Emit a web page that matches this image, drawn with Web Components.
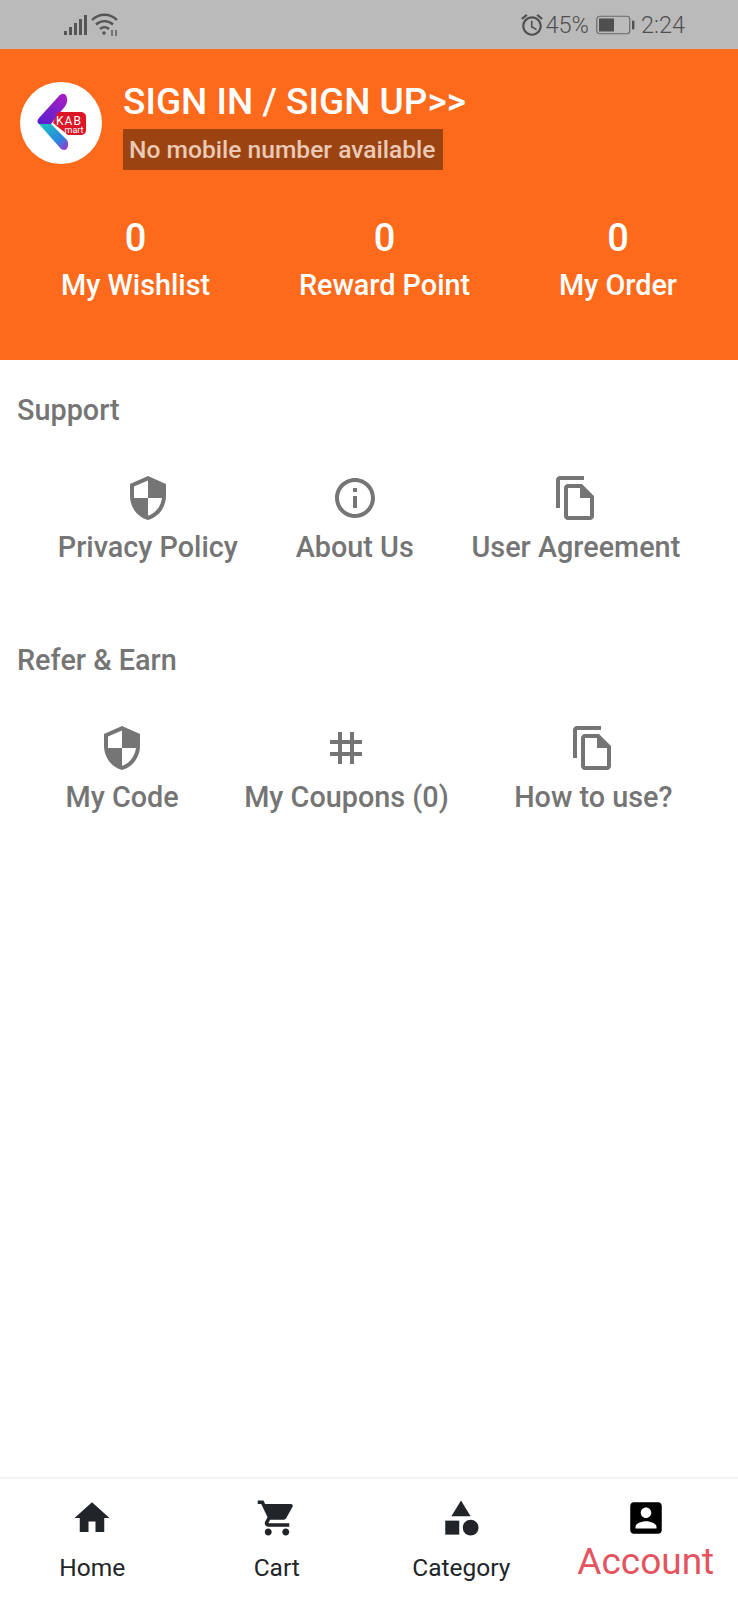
<!DOCTYPE html>
<html>
<head>
<meta charset="utf-8">
<title>Account</title>
<style>
  html, body { margin: 0; padding: 0; height: 100%; background: #fff; }
  body { font-family: Roboto, "Noto Sans", sans-serif; }
</style>
</head>
<body>
<app-screen>
  <status-bar></status-bar>
  <account-header></account-header>
  <main-list>
    <menu-section title="Support">
      <menu-tile icon="security" label="Privacy Policy"></menu-tile>
      <menu-tile icon="info" label="About Us"></menu-tile>
      <menu-tile icon="copy" label="User Agreement"></menu-tile>
    </menu-section>
    <menu-section title="Refer &amp; Earn">
      <menu-tile icon="security" label="My Code"></menu-tile>
      <menu-tile icon="tag" label="My Coupons (0)"></menu-tile>
      <menu-tile icon="copy" label="How to use?"></menu-tile>
    </menu-section>
  </main-list>
  <bottom-nav>
    <nav-item icon="home" label="Home"></nav-item>
    <nav-item icon="cart" label="Cart"></nav-item>
    <nav-item icon="category" label="Category"></nav-item>
    <nav-item icon="account" label="Account" active></nav-item>
  </bottom-nav>
</app-screen>

<script>
const ICONS = {
  security: `<path d="M12 1L3 5v6c0 5.55 3.84 10.74 9 12 5.16-1.26 9-6.45 9-12V5l-9-4zm0 10.99h7c-.53 4.12-3.28 7.79-7 8.94V12H5V6.3l7-3.11v8.8z"/>`,
  info: `<path d="M11 7h2v2h-2zm0 4h2v6h-2zm1-9C6.48 2 2 6.48 2 12s4.48 10 10 10 10-4.48 10-10S17.52 2 12 2zm0 18c-4.41 0-8-3.59-8-8s3.59-8 8-8 8 3.59 8 8-3.59 8-8 8z"/>`,
  copy: `<path d="M16 1H4c-1.1 0-2 .9-2 2v14h2V3h12V1zm-1 4H8c-1.1 0-1.99.9-1.99 2L6 21c0 1.1.89 2 1.99 2H19c1.1 0 2-.9 2-2V11l-6-6zM8 21V7h6v5h5v9H8z"/>`,
  tag: `<path d="M20 10V8h-4V4h-2v4h-4V4H8v4H4v2h4v4H4v2h4v4h2v-4h4v4h2v-4h4v-2h-4v-4h4zm-6 4h-4v-4h4v4z"/>`,
  home: `<path d="M10 20v-6h4v6h5v-8h3L12 3 2 12h3v8z"/>`,
  cart: `<path d="M7 18c-1.1 0-1.99.9-1.99 2S5.9 22 7 22s2-.9 2-2-.9-2-2-2zM17 18c-1.1 0-1.99.9-1.99 2s.89 2 1.99 2 2-.9 2-2-.9-2-2-2zM1 2v2h2l3.6 7.59-1.35 2.45c-.16.28-.25.61-.25.96 0 1.1.9 2 2 2h12v-2H7.42c-.14 0-.25-.11-.25-.25l.03-.12.9-1.63h7.45c.75 0 1.41-.41 1.75-1.03l3.58-6.47c.08-.14.12-.31.12-.48 0-.55-.45-1-1-1H5.21l-.94-2H1z"/>`,
  category: `<path d="M12 2l-5.5 9h11z"/><circle cx="17.5" cy="17.5" r="4.5"/><path d="M3 13.5h8v8H3z"/>`,
  account: `<path d="M3 5v14c0 1.1.89 2 2 2h14c1.1 0 2-.9 2-2V5c0-1.1-.9-2-2-2H5c-1.11 0-2 .9-2 2zm12 4c0 1.66-1.34 3-3 3s-3-1.34-3-3 1.34-3 3-3 3 1.34 3 3zm-9 8c0-2 4-3.1 6-3.1s6 1.1 6 3.1v1H6v-1z"/>`
};

class AppScreen extends HTMLElement {
  constructor() {
    super();
    this.attachShadow({ mode: "open" });
    this.shadowRoot.innerHTML = `
      <style>
        :host { display: flex; flex-direction: column; height: 100vh; overflow: hidden; }
      </style>
      <slot></slot>`;
  }
}

class StatusBar extends HTMLElement {
  constructor() {
    super();
    this.attachShadow({ mode: "open" });
    this.shadowRoot.innerHTML = `
      <style>
        :host {
          display: flex;
          flex: none;
          height: 49px;
          box-sizing: border-box;
          padding: 0 53px 0 64px;
          align-items: center;
          justify-content: space-between;
          background: #bababa;
          color: #4f4f4f;
          font-size: 23.5px;
          font-weight: 300;
        }
        .side { display: flex; align-items: center; }
        .clock { margin-left: 6px; }
        svg { display: block; }
      </style>
      <div class="side">
        <svg width="24" height="24" viewBox="0 0 24 24" fill="#555">
          <rect x="0" y="18" width="3" height="4"/>
          <rect x="5" y="14" width="3" height="8"/>
          <rect x="10" y="10" width="3" height="12"/>
          <rect x="15" y="6" width="3" height="16"/>
          <rect x="20" y="2" width="3" height="20"/>
        </svg>
        <svg style="margin-left:3px" width="28" height="28" viewBox="0 0 28 28" fill="none" stroke="#555" stroke-width="2.4">
          <path d="M1 9 C8 2 19 2 26 9"/>
          <path d="M5 13.5 C10 9 17 9 22 13.5"/>
          <path d="M9 18 C12 15.5 15 15.5 18 18"/>
          <circle cx="13" cy="22" r="1.8" fill="#555" stroke="none"/>
          <path d="M21 19v6M25 19v6" stroke-width="1.4"/>
        </svg>
      </div>
      <div class="side">
        <svg width="26" height="26" viewBox="0 0 24 24" fill="#4f4f4f">
          <path d="M22 5.72l-4.6-3.86-1.29 1.53 4.6 3.86L22 5.72zM7.88 3.39L6.6 1.86 2 5.71l1.29 1.53 4.59-3.85zM12.5 8H11v6l4.75 2.85.75-1.23-4-2.37V8zM12 4c-4.97 0-9 4.03-9 9s4.03 9 9 9 9-4.03 9-9-4.03-9-9-9zm0 16c-3.87 0-7-3.13-7-7s3.13-7 7-7 7 3.13 7 7-3.13 7-7 7z"/>
        </svg>
        <span style="margin-left:1px">45%</span>
        <svg style="margin-left:7px" width="39" height="20" viewBox="0 0 39 20">
          <rect x="0.75" y="1.25" width="33" height="17.5" rx="3" fill="none" stroke="#6a6a6a" stroke-width="1.2"/>
          <rect x="3" y="3.5" width="15" height="13" fill="#4f4f4f"/>
          <rect x="36" y="5.5" width="2.4" height="9" rx="1" fill="#4f4f4f"/>
        </svg>
        <span class="clock">2:24</span>
      </div>`;
  }
}

class AccountHeader extends HTMLElement {
  constructor() {
    super();
    this.attachShadow({ mode: "open" });
    this.shadowRoot.innerHTML = `
      <style>
        :host {
          display: block;
          flex: none;
          height: 311px;
          box-sizing: border-box;
          padding: 31px 0 0 20px;
          background: #fd6a1c;
          color: #fff;
        }
        .top { display: flex; align-items: flex-start; gap: 21px; }
        .logo {
          flex: none;
          width: 82px;
          height: 82px;
          margin-top: 2px;
          border-radius: 50%;
          background: #fff;
        }
        .sign { font-size: 37px; font-weight: 500; line-height: 44px; }
        .mobile {
          display: inline-block;
          margin-top: 5px;
          padding: 0 7px 0 6px;
          font-size: 24.6px;
          font-weight: 500;
          line-height: 41px;
          color: #eac9b6;
          background: #9b4311;
        }
        .stats {
          display: flex;
          justify-content: space-between;
          margin: 45px 0 0 -20px;
          padding: 0 61px;
        }
      </style>
      <div class="top">
        <svg class="logo" viewBox="0 0 82 82">
          <defs>
            <linearGradient id="up" x1="0.9" y1="0" x2="0.1" y2="1">
              <stop offset="0" stop-color="#a81fc0"/>
              <stop offset="1" stop-color="#5a1fd0"/>
            </linearGradient>
            <linearGradient id="down" x1="0" y1="0" x2="1" y2="1">
              <stop offset="0" stop-color="#1cc6c0"/>
              <stop offset="0.65" stop-color="#2a86e0"/>
              <stop offset="1" stop-color="#b02bc8"/>
            </linearGradient>
          </defs>
          <path d="M38 15 C42 10 46 11 47 16 C48 21 45 25 42 28 L31 42 L19 42 C17 41 17 38 19 36 Z" fill="url(#up)"/>
          <path d="M19 42 L31 42 L47 58 C50 63 47 71 41 67 Z" fill="url(#down)"/>
          <path d="M38 30 H60 C64 30 66 32 66 35 V48 C66 51 64 53 60 53 H48 L33 41 Z" fill="#dc1626"/>
          <text x="49" y="43" text-anchor="middle" font-family="Roboto, sans-serif" font-size="12" font-weight="400" fill="#fff" letter-spacing="1">KAB</text>
          <text x="54" y="51" text-anchor="middle" font-family="Roboto, sans-serif" font-size="9" fill="#fff">mart</text>
        </svg>
        <div>
          <div class="sign">SIGN IN / SIGN UP&gt;&gt;</div>
          <span class="mobile">No mobile number available</span>
        </div>
      </div>
      <div class="stats">
        <stat-item count="0" label="My Wishlist"></stat-item>
        <stat-item count="0" label="Reward Point"></stat-item>
        <stat-item count="0" label="My Order"></stat-item>
      </div>`;
  }
}

class StatItem extends HTMLElement {
  constructor() {
    super();
    this.attachShadow({ mode: "open" });
  }

  connectedCallback() {
    this.shadowRoot.innerHTML = `
      <style>
        :host { display: block; text-align: center; font-weight: 500; color: #fff; }
        .count { font-size: 38px; line-height: 46px; }
        .label { font-size: 28.8px; line-height: 48px; }
      </style>
      <div class="count">${this.getAttribute("count")}</div>
      <div class="label">${this.getAttribute("label")}</div>`;
  }
}

class MainList extends HTMLElement {
  constructor() {
    super();
    this.attachShadow({ mode: "open" });
    this.shadowRoot.innerHTML = `
      <style>
        :host { display: block; flex: 1; min-height: 0; padding-top: 30px; background: #fff; }
      </style>
      <slot></slot>`;
  }
}

class MenuSection extends HTMLElement {
  constructor() {
    super();
    this.attachShadow({ mode: "open" });
  }

  connectedCallback() {
    this.shadowRoot.innerHTML = `
      <style>
        :host { display: block; height: 250px; color: #757575; }
        .title {
          padding-left: 17px;
          font-size: 28.8px;
          font-weight: 500;
          line-height: 40px;
        }
        .row { display: flex; justify-content: space-evenly; margin-top: 44px; }
      </style>
      <div class="title"></div>
      <div class="row"><slot></slot></div>`;
    this.shadowRoot.querySelector(".title").textContent = this.getAttribute("title");
  }
}

class MenuTile extends HTMLElement {
  constructor() {
    super();
    this.attachShadow({ mode: "open" });
  }

  connectedCallback() {
    this.shadowRoot.innerHTML = `
      <style>
        :host { display: flex; flex-direction: column; align-items: center; color: #757575; }
        svg { display: block; width: 48px; height: 48px; fill: currentColor; }
        .label { margin-top: 5px; font-size: 28.8px; font-weight: 500; line-height: 40px; white-space: nowrap; }
      </style>
      <svg viewBox="0 0 24 24">${ICONS[this.getAttribute("icon")]}</svg>
      <div class="label">${this.getAttribute("label")}</div>`;
  }
}

class BottomNav extends HTMLElement {
  constructor() {
    super();
    this.attachShadow({ mode: "open" });
    this.shadowRoot.innerHTML = `
      <style>
        :host {
          display: grid;
          flex: none;
          grid-template-columns: repeat(4, 1fr);
          height: 123px;
          box-sizing: border-box;
          padding-top: 18px;
          background: #fff;
          border-top: 2px solid #f3f3f3;
        }
      </style>
      <slot></slot>`;
  }
}

class NavItem extends HTMLElement {
  constructor() {
    super();
    this.attachShadow({ mode: "open" });
  }

  connectedCallback() {
    this.shadowRoot.innerHTML = `
      <style>
        :host { display: flex; flex-direction: column; align-items: center; color: #212529; }
        svg { display: block; width: 42px; height: 42px; fill: currentColor; }
        .label { margin-top: 11px; font-size: 24.5px; line-height: 36px; white-space: nowrap; }
        :host([active]) svg { fill: #000; }
        :host([active]) .label { margin-top: 1px; font-size: 37px; line-height: 44px; color: #e4545f; }
      </style>
      <svg viewBox="0 0 24 24">${ICONS[this.getAttribute("icon")]}</svg>
      <div class="label">${this.getAttribute("label")}</div>`;
  }
}

customElements.define("app-screen", AppScreen);
customElements.define("status-bar", StatusBar);
customElements.define("account-header", AccountHeader);
customElements.define("stat-item", StatItem);
customElements.define("main-list", MainList);
customElements.define("menu-section", MenuSection);
customElements.define("menu-tile", MenuTile);
customElements.define("bottom-nav", BottomNav);
customElements.define("nav-item", NavItem);
</script>
</body>
</html>
